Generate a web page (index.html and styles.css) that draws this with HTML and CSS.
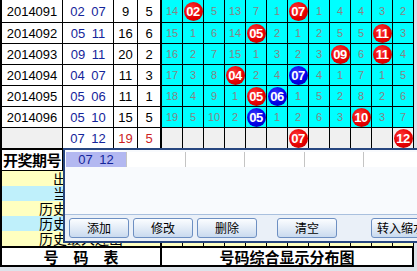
FILE: index.html
```html
<!DOCTYPE html>
<html lang="zh-CN">
<head>
    <meta charset="utf-8">
    <title>号码表</title>
    <link rel="stylesheet" href="styles.css">
</head>
<body>
<div class="page">
    <div class="sheet">

        <div class="draw first">
            <div class="issue">2014091</div><div class="nums">02 07</div><div class="sum">9</div><div class="span">5</div>
            <div class="g">14</div><div class="g"><b class="ball red">02</b></div><div class="g">5</div><div class="g">13</div><div class="g">7</div><div class="g">1</div>
            <div class="g"><b class="ball red">07</b></div><div class="g">1</div><div class="g">4</div><div class="g">4</div><div class="g">3</div><div class="g">2</div>
        </div>
        <div class="draw">
            <div class="issue">2014092</div><div class="nums">05 11</div><div class="sum">16</div><div class="span">6</div>
            <div class="g">15</div><div class="g">1</div><div class="g">6</div><div class="g">14</div><div class="g"><b class="ball red">05</b></div><div class="g">2</div>
            <div class="g">1</div><div class="g">2</div><div class="g">5</div><div class="g">5</div><div class="g"><b class="ball red">11</b></div><div class="g">3</div>
        </div>
        <div class="draw">
            <div class="issue">2014093</div><div class="nums">09 11</div><div class="sum">20</div><div class="span">2</div>
            <div class="g">16</div><div class="g">2</div><div class="g">7</div><div class="g">15</div><div class="g">1</div><div class="g">3</div>
            <div class="g">2</div><div class="g">3</div><div class="g"><b class="ball red">09</b></div><div class="g">6</div><div class="g"><b class="ball red">11</b></div><div class="g">4</div>
        </div>
        <div class="draw">
            <div class="issue">2014094</div><div class="nums">04 07</div><div class="sum">11</div><div class="span">3</div>
            <div class="g">17</div><div class="g">3</div><div class="g">8</div><div class="g"><b class="ball red">04</b></div><div class="g">2</div><div class="g">4</div>
            <div class="g"><b class="ball blue">07</b></div><div class="g">4</div><div class="g">1</div><div class="g">7</div><div class="g">1</div><div class="g">5</div>
        </div>
        <div class="draw">
            <div class="issue">2014095</div><div class="nums">05 06</div><div class="sum">11</div><div class="span">1</div>
            <div class="g">18</div><div class="g">4</div><div class="g">9</div><div class="g">1</div><div class="g"><b class="ball red">05</b></div><div class="g"><b class="ball blue">06</b></div>
            <div class="g">1</div><div class="g">5</div><div class="g">2</div><div class="g">8</div><div class="g">2</div><div class="g">6</div>
        </div>
        <div class="draw">
            <div class="issue">2014096</div><div class="nums">05 10</div><div class="sum">15</div><div class="span">5</div>
            <div class="g">19</div><div class="g">5</div><div class="g">10</div><div class="g">2</div><div class="g"><b class="ball blue">05</b></div><div class="g">1</div>
            <div class="g">2</div><div class="g">6</div><div class="g">3</div><div class="g"><b class="ball red">10</b></div><div class="g">3</div><div class="g">7</div>
        </div>
        <div class="draw forecast">
            <div class="issue"></div><div class="nums">07 12</div><div class="sum hot">19</div><div class="span hot">5</div>
            <div class="g"></div><div class="g"></div><div class="g"></div><div class="g"></div><div class="g"></div><div class="g"></div>
            <div class="g"><b class="ball red">07</b></div><div class="g"></div><div class="g"></div><div class="g"></div><div class="g"></div><div class="g"><b class="ball red">12</b></div>
        </div>

        <div class="stats">
            <div class="stats-head"><div class="label-strong">开奖期号</div><div></div></div>
            <div class="stat yellow"><div class="label">出现次数</div><div class="cells"><i></i><i></i><i></i><i></i><i></i><i></i><i></i><i></i><i></i><i></i><i></i><i></i></div></div>
            <div class="stat cyan"><div class="label">当前遗漏</div><div class="cells"><i></i><i></i><i></i><i></i><i></i><i></i><i></i><i></i><i></i><i></i><i></i><i></i></div></div>
            <div class="stat yellow"><div class="label">历史最大遗漏</div><div class="cells"><i></i><i></i><i></i><i></i><i></i><i></i><i></i><i></i><i></i><i></i><i></i><i></i></div></div>
            <div class="stat cyan"><div class="label">历史平均遗漏</div><div class="cells"><i></i><i></i><i></i><i></i><i></i><i></i><i></i><i></i><i></i><i></i><i></i><i></i></div></div>
            <div class="stat yellow"><div class="label">历史最大连出</div><div class="cells"><i></i><i></i><i></i><i></i><i></i><i></i><i></i><i></i><i></i><i></i><i></i><i></i></div></div>
        </div>

        <div class="footer">
            <div class="foot-left">号　码　表</div>
            <div class="foot-right">号码综合显示分布图</div>
        </div>
    </div>

    <div class="dialog">
        <div class="list">
            <div class="list-row">
                <span class="picked">07 12</span><span></span><span></span><span></span><span></span><span></span>
            </div>
        </div>
        <div class="bar">
            <button class="btn">添加</button>
            <button class="btn">修改</button>
            <button class="btn">删除</button>
            <button class="btn wide-gap">清空</button>
            <button class="btn far-gap">转入缩水</button>
        </div>
    </div>
</div>
</body>
</html>
```

FILE: styles.css
```css
* {
    box-sizing: border-box;
}

body {
    margin: 0;
    background-color: #dde3ea;
    font-family: "Liberation Sans", "Noto Sans CJK SC", sans-serif;
    overflow: hidden;
}

.page {
    position: relative;
    width: 417px;
    height: 271px;
    overflow: hidden;
}

.sheet {
    width: 414px;
    border-left: 2px solid #000;
    background-color: #ffffff;
}

/* draw rows */
.draw {
    display: grid;
    grid-template-columns: 61px 51px 24px 24px repeat(12, 21px);
}

.draw > div {
    height: 21px;
    border-right: 1px solid #000;
    border-bottom: 1px solid #000;
    display: flex;
    align-items: center;
    justify-content: center;
    font-size: 13px;
    color: #000;
}

.draw.first > div {
    height: 23px;
}

.draw .nums {
    color: #14249a;
    word-spacing: 3px;
}

.draw .span {
    border-right-width: 2px;
}

.draw .hot {
    color: #cc1f1f;
}

.draw .g {
    background-color: #00ffff;
    color: #858585;
    font-size: 11px;
}

.forecast .issue,
.forecast .g {
    background-color: #f0f0f0;
}

.ball {
    width: 19px;
    height: 19px;
    border-radius: 50%;
    display: flex;
    align-items: center;
    justify-content: center;
    color: #ffffff;
    font-size: 13px;
    font-weight: bold;
    letter-spacing: -0.5px;
}

.ball.red {
    background: radial-gradient(circle at 40% 35%, #ff3a3a, #e60000 55%, #b50000);
}

.ball.blue {
    background: radial-gradient(circle at 40% 35%, #3a3aff, #0000e6 55%, #0000a8);
}

/* statistics under the draws */
.stats {
    border-top: 1px solid #000;
}

.stats-head {
    display: grid;
    grid-template-columns: 61px 1fr;
    height: 21px;
    border-bottom: 1px solid #000;
}

.label-strong {
    border-right: 1px solid #000;
    font-family: "Noto Sans CJK SC", sans-serif;
    font-weight: bold;
    font-size: 15px;
    line-height: 20px;
    text-align: center;
    letter-spacing: -0.5px;
}

.stat {
    display: grid;
    grid-template-columns: 160px 252px;
    height: 15px;
}

.stat.yellow {
    background-color: #ffffc0;
}

.stat.cyan {
    background-color: #bff0fb;
}

.stat .label {
    border-right: 2px solid #000;
    font-family: "Noto Sans CJK SC", sans-serif;
    font-size: 14px;
    line-height: 15px;
    text-align: center;
    white-space: nowrap;
    overflow: hidden;
}

.stat .cells {
    display: flex;
}

.stat .cells i {
    width: 21px;
    border-right: 1px solid #000;
}

.footer {
    display: grid;
    grid-template-columns: 160px 252px;
    height: 21px;
    border-top: 2px solid #000;
    border-bottom: 2px solid #000;
    font-family: "Noto Sans CJK SC", sans-serif;
    font-weight: bold;
    font-size: 15px;
    line-height: 17px;
    text-align: center;
}

.foot-left {
    border-right: 2px solid #000;
}

.foot-right {
    border-right: 2px solid #000;
}

/* floating editor over the sheet */
.dialog {
    position: absolute;
    left: 63px;
    top: 148px;
    width: 360px;
    height: 95px;
    border: 2px solid #27467f;
    border-right: none;
    background-color: #eef3f9;
    display: flex;
    flex-direction: column;
}

.list {
    height: 65px;
    padding: 2px 0 0 1px;
    background-color: #f8fafd;
    border-bottom: 1px solid #a9c0de;
}

.list-row {
    display: flex;
    height: 15px;
}

.list-row span {
    width: 60px;
    border-right: 1px solid #c4c4c4;
    background-color: #ffffff;
}

.list-row .picked {
    width: 62px;
    background-color: #b3b8f1;
    color: #14249a;
    font-size: 13px;
    line-height: 15px;
    text-align: center;
    word-spacing: 3px;
}

.bar {
    flex: 1;
    display: flex;
    align-items: flex-start;
    padding: 3px 0 0 0;
    background-color: #eaf0f8;
}

.btn {
    flex: none;
    width: 60px;
    height: 20px;
    margin: 0 0 0 4px;
    padding: 0;
    border: 1px solid #6d8fc2;
    border-radius: 3px;
    background: linear-gradient(#fbfdff, #e3ecf7 50%, #c9daef);
    font-family: "Noto Sans CJK SC", sans-serif;
    font-size: 12px;
    line-height: 18px;
    color: #000;
    white-space: nowrap;
    overflow: hidden;
}

.btn.wide-gap {
    margin-left: 20px;
}

.btn.far-gap {
    margin-left: 34px;
    text-align: left;
    padding-left: 5px;
}
```
